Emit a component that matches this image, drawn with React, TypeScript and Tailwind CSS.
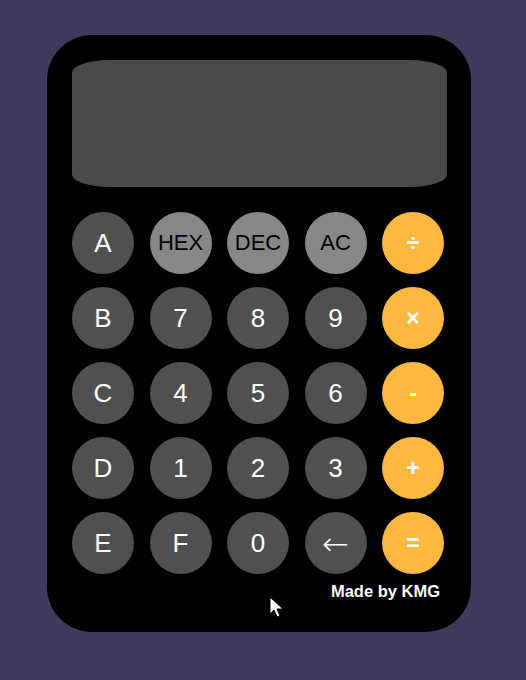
import React from "react";

type Key = { label: string; kind: "dark" | "light" | "op" | "arrow" };

const keys: Key[] = [
  { label: "A", kind: "dark" },
  { label: "HEX", kind: "light" },
  { label: "DEC", kind: "light" },
  { label: "AC", kind: "light" },
  { label: "÷", kind: "op" },
  { label: "B", kind: "dark" },
  { label: "7", kind: "dark" },
  { label: "8", kind: "dark" },
  { label: "9", kind: "dark" },
  { label: "×", kind: "op" },
  { label: "C", kind: "dark" },
  { label: "4", kind: "dark" },
  { label: "5", kind: "dark" },
  { label: "6", kind: "dark" },
  { label: "-", kind: "op" },
  { label: "D", kind: "dark" },
  { label: "1", kind: "dark" },
  { label: "2", kind: "dark" },
  { label: "3", kind: "dark" },
  { label: "+", kind: "op" },
  { label: "E", kind: "dark" },
  { label: "F", kind: "dark" },
  { label: "0", kind: "dark" },
  { label: "←", kind: "arrow" },
  { label: "=", kind: "op" },
];

const styles = {
  dark: "bg-[#505050] text-white text-[26px]",
  light: "bg-[#878787] text-black text-[22px]",
  op: "bg-[#fdb83f] text-white text-[23px] font-bold",
  arrow: "bg-[#505050] text-white text-[32px] font-['DejaVu_Sans',sans-serif] font-light pt-[2px]",
};

const Pointer: React.FC = () => (
  <svg className="absolute left-[269px] top-[596px]" width="16" height="24" viewBox="0 0 16 24">
    <path
      d="M1 1 L1 18 L5 14 L8 21 L11 20 L8 13 L14 13 Z"
      fill="#fff"
      stroke="#000"
      strokeWidth="1"
      strokeLinejoin="round"
    />
  </svg>
);

const App: React.FC = () => {
  return (
    <div className="relative min-h-screen w-full bg-[#403b5c] pl-[47px] pt-[35px] font-['Liberation_Sans',Arial,sans-serif]">
      <div className="flex h-[597px] w-[424px] flex-col rounded-[45px] bg-black px-[25px] pt-[25px]">
        <div className="h-[127px] w-[375px] rounded-[10%] bg-[#4a4a4a]" />

        <div className="mt-[25px] grid w-[372px] grid-cols-[repeat(5,62px)] gap-x-[15.5px] gap-y-[13px]">
          {keys.map((k) => (
            <button
              key={k.label}
              className={`flex h-[62px] w-[62px] items-center justify-center rounded-full leading-none ${styles[k.kind]}`}
            >
              {k.label}
            </button>
          ))}
        </div>

        <p className="mt-[5px] w-[375px] pr-[7px] text-right text-[16.5px] font-bold text-white">
          Made by KMG
        </p>
      </div>
      <Pointer />
    </div>
  );
};

export default App;
